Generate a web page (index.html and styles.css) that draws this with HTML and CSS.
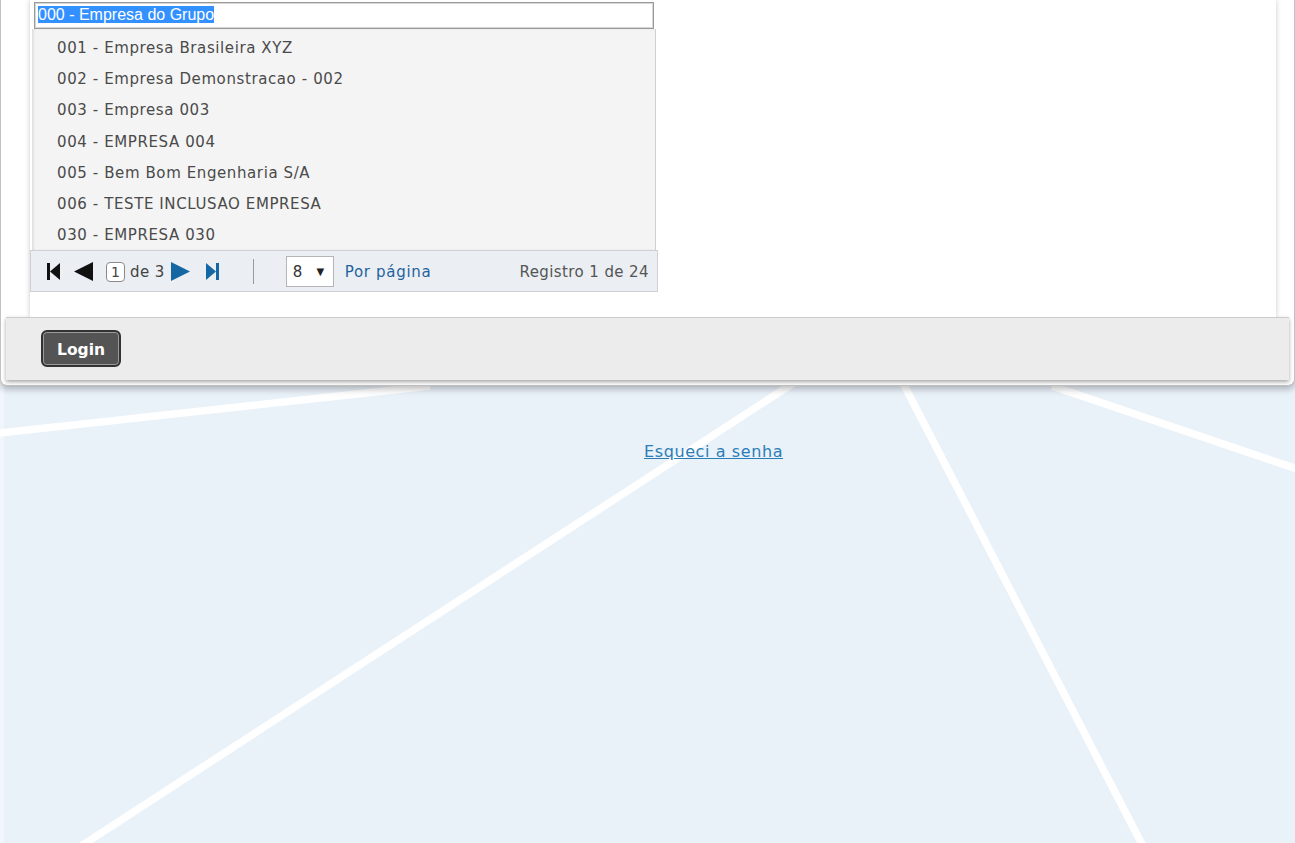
FILE: index.html
```html
<!DOCTYPE html>
<html lang="pt-BR">
<head>
<meta charset="utf-8">
<title>Login</title>
<link rel="stylesheet" href="styles.css">
</head>
<body>
<div class="bg" aria-hidden="true">
  <svg width="1295" height="843" viewBox="0 0 1295 843">
    <rect x="0" y="0" width="4" height="843" fill="#f0f6fc"/>
    <g stroke="#ffffff" stroke-width="7.5" fill="none" stroke-linecap="butt">
      <line x1="-10" y1="434" x2="430" y2="386"/>
      <line x1="75" y1="850" x2="795" y2="382"/>
      <line x1="903" y1="383" x2="1145" y2="850"/>
      <line x1="1052" y1="386" x2="1300" y2="470"/>
    </g>
  </svg>
</div>

<div class="card">
  <div class="panel">
    <div class="combo">
      <div class="combo-input"><span class="sel">000 - Empresa do Grupo</span></div>
      <ul class="combo-list">
        <li>001 - Empresa Brasileira XYZ</li>
        <li>002 - Empresa Demonstracao - 002</li>
        <li>003 - Empresa 003</li>
        <li>004 - EMPRESA 004</li>
        <li>005 - Bem Bom Engenharia S/A</li>
        <li>006 - TESTE INCLUSAO EMPRESA</li>
        <li>030 - EMPRESA 030</li>
      </ul>
      <div class="pager">
        <div class="nav">
          <svg class="ico first" width="13" height="17" viewBox="0 0 13 17"><rect x="0" y="0" width="3" height="17" fill="#111"/><polygon points="13,0 13,17 3,8.5" fill="#111"/></svg>
          <svg class="ico prev" width="19" height="19" viewBox="0 0 19 19"><polygon points="19,0 19,19 0,9.5" fill="#111"/></svg>
          <span class="pagebox">1</span>
          <span class="of">de 3</span>
          <svg class="ico next" width="19" height="19" viewBox="0 0 19 19"><polygon points="0,0 0,19 19,9.5" fill="#1467a3"/></svg>
          <svg class="ico last" width="13" height="17" viewBox="0 0 13 17"><polygon points="0,0 0,17 10,8.5" fill="#1467a3"/><rect x="10" y="0" width="3" height="17" fill="#1467a3"/></svg>
        </div>
        <span class="sep"></span>
        <div class="select"><span>8</span><span class="caret">▼</span></div>
        <span class="perpage">Por página</span>
        <span class="count">Registro 1 de 24</span>
      </div>
    </div>
  </div>
  <div class="footer">
    <button class="btn-login" type="button">Login</button>
  </div>
</div>

<div class="forgot"><a href="#">Esqueci a senha</a></div>
</body>
</html>
```

FILE: styles.css
```css
html, body {
  margin: 0;
  padding: 0;
}
body {
  background: #e9f1f9;
  width: 1295px;
  height: 843px;
  overflow: hidden;
  position: relative;
  font-family: "DejaVu Sans", "Noto Sans", sans-serif;
}
.bg {
  position: absolute;
  left: 0;
  top: 0;
  z-index: 0;
}
.bg svg { display: block; }

.card {
  position: relative;
  z-index: 1;
  box-sizing: border-box;
  width: 1295px;
  background: #fff;
  border: 1px solid #c2c2c2;
  border-top: none;
  border-radius: 0 0 7px 7px;
  padding: 0 5px 5px 5px;
  box-shadow: 0 3px 7px rgba(0, 0, 0, 0.28);
}
.panel {
  box-sizing: border-box;
  height: 317px;
  padding-top: 2px;
  margin: 0 13px 0 24px;
  background: #fff;
  box-shadow: 0 0 5px rgba(0, 0, 0, 0.22);
  clip-path: inset(0 -8px 0 -8px);
}
.combo {
  width: 627px;
}
.combo-input {
  box-sizing: border-box;
  margin: 0 0 0 4px;
  width: 620px;
  height: 27px;
  border: 1px solid #9a9a9a;
  box-shadow: inset 0 0 0 1px #d6d6d6;
  background: #fff;
  padding: 2px 3px;
  font-family: "Liberation Sans", Arial, sans-serif;
  font-size: 16px;
  line-height: 20px;
}
.sel {
  background: #3390ff;
  color: #fff;
}
.combo-list {
  list-style: none;
  box-sizing: border-box;
  margin: 0 0 0 2px;
  width: 624px;
  height: 221px;
  padding: 4px 0 0 25px;
  overflow: hidden;
  background: #f4f4f4;
  border-right: 1px solid #cfcfcf;
  box-shadow: inset 2px 0 2px rgba(0, 0, 0, 0.08);
  color: #4a4a4a;
  font-size: 15px;
  letter-spacing: 0.6px;
}
.combo-list li {
  height: 31.2px;
  line-height: 31.2px;
  white-space: nowrap;
}
.pager {
  box-sizing: border-box;
  width: 628px;
  height: 42px;
  display: flex;
  align-items: center;
  background: #ebeff4;
  border: 1px solid #cdd1d5;
  padding: 1px 8px 0 16px;
  color: #555;
  font-size: 15px;
  letter-spacing: 0.4px;
}
.nav {
  display: flex;
  align-items: center;
}
.ico { display: block; }
.first { margin-right: 14px; }
.prev { margin-right: 13px; }
.pagebox {
  box-sizing: border-box;
  width: 19px;
  height: 20px;
  border: 1px solid #8a8a8a;
  border-radius: 4px;
  background: #fff;
  font-size: 14px;
  line-height: 18px;
  text-align: center;
  letter-spacing: 0;
  margin-right: 5px;
  color: #444;
}
.of { margin-right: 6px; color: #444; }
.next { margin-right: 16px; }
.sep {
  width: 1px;
  height: 25px;
  background: #9a9a9a;
  margin: 0 32px 0 34px;
}
.select {
  box-sizing: border-box;
  width: 48px;
  height: 31px;
  border: 1px solid #b5b5b5;
  background: #fff;
  display: flex;
  align-items: center;
  justify-content: space-between;
  padding: 0 8px 0 6px;
  font-size: 15px;
  color: #333;
}
.caret {
  font-size: 10px;
  color: #222;
}
.perpage {
  margin-left: 11px;
  color: #1f639e;
  letter-spacing: 0.7px;
}
.count {
  margin-left: auto;
  color: #555;
}

.footer {
  box-sizing: border-box;
  height: 63px;
  background: #ececec;
  border-top: 1px solid #cccccc;
  box-shadow: 0 2px 4px rgba(0, 0, 0, 0.35);
  padding: 12px 0 0 35px;
}
.btn-login {
  box-sizing: border-box;
  width: 80px;
  height: 37px;
  border: 2px solid #333;
  border-radius: 6px;
  background: #545454;
  box-shadow: inset 0 0 0 1px #9a9a9a;
  color: #fff;
  font-family: "DejaVu Sans", "Noto Sans", sans-serif;
  font-weight: bold;
  font-size: 15.5px;
  padding: 3px 0 0 0;
  cursor: pointer;
}

.forgot {
  position: relative;
  z-index: 1;
  margin-top: 56px;
  padding-left: 644px;
  font-size: 16px;
  letter-spacing: 0.6px;
}
.forgot a {
  color: #2b7db8;
  text-decoration: underline;
}
```
